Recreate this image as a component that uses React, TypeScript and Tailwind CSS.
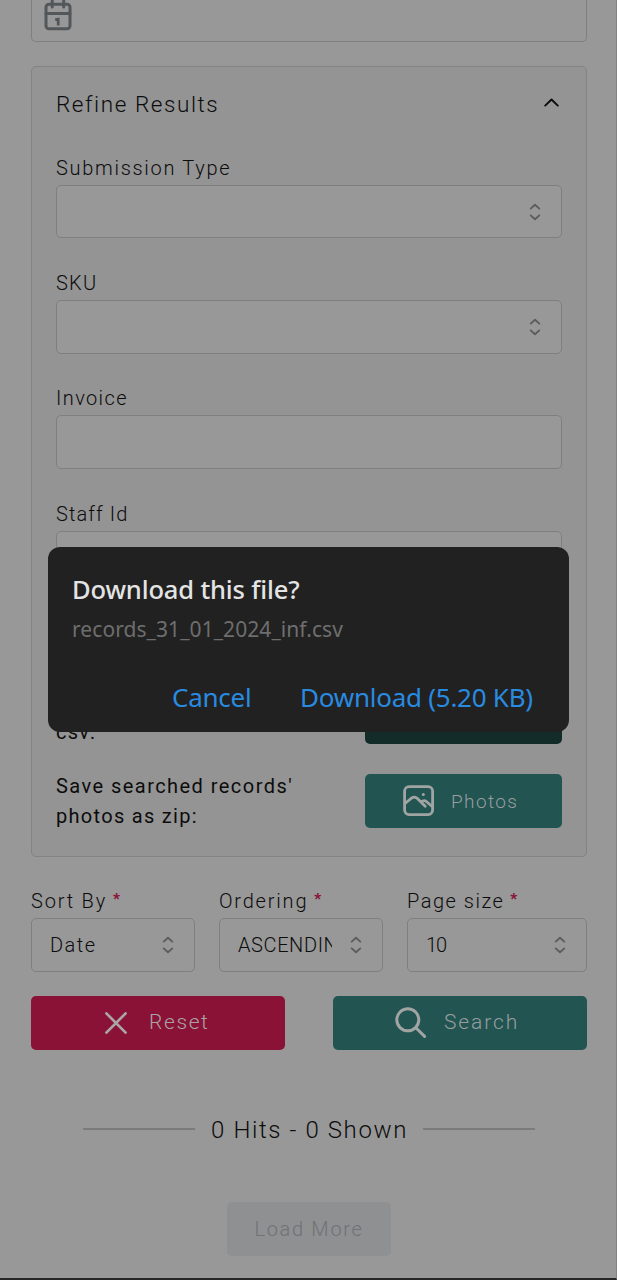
import type { ReactNode } from "react";

function Sorter({ className = "" }: { className?: string }) {
  return (
    <svg className={"h-[18px] w-3 shrink-0 " + className} viewBox="0 0 12 18" fill="none" stroke="#5a5c5e" strokeWidth="1.9" strokeLinecap="round" strokeLinejoin="round">
      <path d="M1.7 5.6 6 1.7 10.3 5.6M1.7 12.4 6 16.3 10.3 12.4" />
    </svg>
  );
}

function Field({ label, tracking, children }: { label: string; tracking: string; children?: ReactNode }) {
  return (
    <div className="h-[115.3px]">
      <div className={"h-[31px] text-[20px] leading-[28px] whitespace-nowrap " + tracking}>{label}</div>
      <div className="flex h-[53.7px] items-center justify-end rounded-[5px] border border-[#7f7f7f] bg-[#989898] pr-5">{children}</div>
    </div>
  );
}

function Picker({ label, tracking, width, value, valueTracking }: { label: string; tracking: string; width: string; value: string; valueTracking: string }) {
  return (
    <div className={width}>
      <div className="flex h-[30px] text-[20px] leading-[26px] whitespace-nowrap">
        <span className={tracking}>{label}</span>
        <span className="ml-1.5 text-[15px] leading-[23px] font-black text-[#8a1237]">*</span>
      </div>
      <div className="flex h-[53.5px] items-center justify-between rounded-[5px] border border-[#7f7f7f] pr-5 pl-[18px]">
        <span className={"w-[94px] overflow-hidden text-[20px] font-light whitespace-nowrap " + valueTracking}>{value}</span>
        <Sorter />
      </div>
    </div>
  );
}

export default function App() {
  return (
    <div className="relative h-[1280px] w-[617px] overflow-hidden border-r border-b-2 border-r-[#828282] border-b-[#282526] bg-[#989898] font-['Roboto',sans-serif] font-light text-[#0c0c0c]">
      <main className="flex flex-col pr-[29px] pl-[31px]">
        <div className="h-[42px] rounded-b-[5px] border border-t-0 border-[#7f7f7f] pl-3">
          <svg className="h-[31px] w-7" viewBox="0 0 28 31" fill="none" stroke="#53575a" strokeWidth="3" strokeLinecap="round">
            <rect x="2" y="4.3" width="24" height="24.5" rx="3" />
            <path d="M2 13.6h24M8.2-1v8M19.7-1v8" />
            <path d="m11.2 19.6 3-.4v6.4" strokeWidth="2.8" strokeLinecap="butt" />
          </svg>
        </div>

        <section className="mt-6 h-[791px] rounded-[5px] border border-[#838383] bg-[#949494] px-6">
          <header className="flex h-[74px] items-center justify-between pr-[3.5px]">
            <h2 className="mt-[2px] text-[22.5px] tracking-[1.57px]">Refine Results</h2>
            <svg className="mb-1 h-[9px] w-[15px]" viewBox="0 0 15 9" fill="none" stroke="#0c0c0c" strokeWidth="1.9" strokeLinecap="round" strokeLinejoin="round">
              <path d="M1.2 7.6 7.5 1.5l6.3 6.1" />
            </svg>
          </header>
          <div className="mt-[12.8px]">
            <Field label="Submission Type" tracking="tracking-[1.7px]"><Sorter /></Field>
            <Field label="SKU" tracking="tracking-[1.2px]"><Sorter /></Field>
            <Field label="Invoice" tracking="tracking-[1.4px]" />
            <Field label="Staff Id" tracking="tracking-[1.1px]" />
          </div>
          <div className="mt-[72px] flex h-[60px] items-center justify-between font-normal">
            <p className="text-[20px] leading-[30px] tracking-[1.2px] whitespace-nowrap">Save searched records as<br />csv:</p>
            <button className="h-[54px] w-[197px] rounded-[5px] bg-[#132c2a]" />
          </div>
          <div className="mt-6 flex h-[60px] items-center justify-between font-normal">
            <p className="text-[20px] leading-[30px] tracking-[1.45px] whitespace-nowrap">Save searched records'<br /><span className="tracking-[1.3px]">photos as zip:</span></p>
            <button className="flex h-[54px] w-[197px] items-center rounded-[5px] bg-[#225452] pl-[38px] text-[19px] font-light text-[#979e9e]">
              <svg className="h-[31px] w-[31px]" viewBox="0 0 31 31" fill="none" stroke="#a0a5a4" strokeWidth="2.8" strokeLinecap="round" strokeLinejoin="round">
                <rect x="1.6" y="1.6" width="28" height="28" rx="4.5" />
                <path d="m2 18.5 6.5-5.4q2.7-2 5.4 0l8.3 8.2M18.2 17.3q3-3.2 6 0l5 4.2" />
                <circle cx="20.3" cy="9.6" r="1.5" fill="#a0a5a4" stroke="none" />
              </svg>
              <span className="mt-[2px] ml-[17px] tracking-[1.4px]">Photos</span>
            </button>
          </div>
        </section>

        <div className="mt-[31px] flex gap-6">
          <Picker label="Sort By" tracking="tracking-[1.8px]" width="w-[164px]" value="Date" valueTracking="tracking-[1.5px]" />
          <Picker label="Ordering" tracking="tracking-[1.8px]" width="w-[164px]" value="ASCENDING" valueTracking="tracking-[0.6px]" />
          <Picker label="Page size" tracking="tracking-[1.5px]" width="w-[180px]" value="10" valueTracking="tracking-[-1px]" />
        </div>

        <div className="mt-[24.5px] flex justify-between text-[21px] text-[#a9a4a5]">
          <button className="flex h-[54px] w-[254px] items-center rounded-[5px] bg-[#8a1237] pl-[74px]">
            <svg className="h-[22px] w-[22px]" viewBox="0 0 22 22" stroke="#aaa5a6" strokeWidth="2.7" strokeLinecap="round">
              <path d="m1.4 1.4 19.2 19.2m0-19.2L1.4 20.6" />
            </svg>
            <span className="ml-[22px] tracking-[1.6px]">Reset</span>
          </button>
          <button className="flex h-[54px] w-[254px] items-center rounded-[5px] bg-[#225452] pl-[62px] text-[#979e9e]">
            <svg className="h-8 w-8" viewBox="0 0 32 32" fill="none" stroke="#a0a5a4" strokeWidth="3" strokeLinecap="round">
              <circle cx="12.8" cy="12.8" r="11" />
              <path d="m20.8 20.8 8.8 8.6" />
            </svg>
            <span className="ml-[17px] tracking-[1.9px]">Search</span>
          </button>
        </div>

        <div className="mt-[62px] flex h-[34px] items-center justify-center gap-[15px]">
          <span className="mr-px h-[1.5px] w-[112px] bg-[#7b7b7b]" />
          <span className="mt-px w-[197px] text-center text-[24px] tracking-[1.6px] whitespace-nowrap">0 Hits - 0 Shown</span>
          <span className="h-[1.5px] w-[112px] bg-[#7b7b7b]" />
        </div>

        <button className="mt-[56px] h-[54px] w-[164px] self-center rounded-[5px] bg-[#8e9092] text-[20px] tracking-[1.7px] text-[#707274]">Load More</button>
      </main>

      <div role="dialog" className="absolute top-[547px] left-12 h-[185px] w-[521px] rounded-[12px] bg-[#212121] px-6 pt-[25px] font-['Noto_Sans',sans-serif] font-normal">
        <h3 className="h-[34px] text-[25.5px] leading-[34px] font-medium tracking-[-0.15px] whitespace-nowrap text-[#e4e4e4]">Download this file?</h3>
        <p className="mt-2 h-[30px] text-[21px] leading-[30px] tracking-[0.07px] whitespace-nowrap text-[#6e6e6e]">records_31_01_2024_inf.csv</p>
        <div className="mt-[35px] flex h-[36px] justify-end gap-12 pr-3 text-[26px] leading-[36px] whitespace-nowrap text-[#298be0]">
          <button className="w-[80px] text-left tracking-[-0.25px]">Cancel</button>
          <button className="w-[233px] text-left tracking-[-0.25px]">Download (5.20 KB)</button>
        </div>
      </div>
    </div>
  );
}
